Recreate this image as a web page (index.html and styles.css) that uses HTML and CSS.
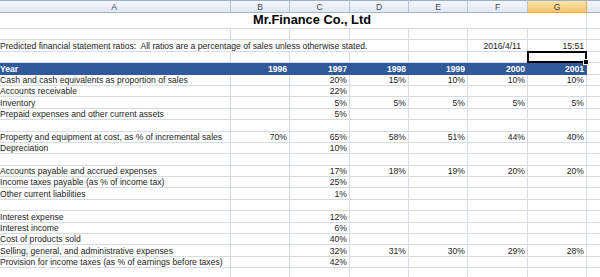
FILE: index.html
```html
<!DOCTYPE html>
<html>
<head>
<meta charset="utf-8">
<link rel="stylesheet" href="styles.css">
</head>
<body>
<div class="sheet">
  <div class="row hdr">
    <div class="h">A</div><div class="h">B</div><div class="h">C</div><div class="h">D</div><div class="h">E</div><div class="h">F</div><div class="h sel">G</div><div class="h"></div>
  </div>
  <div class="row title-row">
    <div class="c title">Mr.Finance Co., Ltd</div><div class="c"></div>
  </div>
  <div class="row"><div class="c"></div><div class="c"></div><div class="c"></div><div class="c"></div><div class="c"></div><div class="c"></div><div class="c"></div><div class="c"></div></div>
  <div class="row">
    <div class="c note">Predicted financial statement ratios:&nbsp; All ratios are a percentage of sales unless otherwise stated.</div><div class="c"></div><div class="c n date">2016/4/11</div><div class="c n">15:51</div><div class="c"></div>
  </div>
  <div class="row"><div class="c"></div><div class="c"></div><div class="c"></div><div class="c"></div><div class="c"></div><div class="c"></div><div class="c active"></div><div class="c"></div></div>
  <div class="row year">
    <div class="c">Year</div><div class="c n">1996</div><div class="c n">1997</div><div class="c n">1998</div><div class="c n">1999</div><div class="c n">2000</div><div class="c n">2001</div><div class="c plain"></div>
  </div>
  <div class="row"><div class="c">Cash and cash equivalents as proportion of sales</div><div class="c"></div><div class="c n">20%</div><div class="c n">15%</div><div class="c n">10%</div><div class="c n">10%</div><div class="c n">10%</div><div class="c"></div></div>
  <div class="row"><div class="c">Accounts receivable</div><div class="c"></div><div class="c n">22%</div><div class="c"></div><div class="c"></div><div class="c"></div><div class="c"></div><div class="c"></div></div>
  <div class="row"><div class="c">Inventory</div><div class="c"></div><div class="c n">5%</div><div class="c n">5%</div><div class="c n">5%</div><div class="c n">5%</div><div class="c n">5%</div><div class="c"></div></div>
  <div class="row"><div class="c">Prepaid expenses and other current assets</div><div class="c"></div><div class="c n">5%</div><div class="c"></div><div class="c"></div><div class="c"></div><div class="c"></div><div class="c"></div></div>
  <div class="row"><div class="c"></div><div class="c"></div><div class="c"></div><div class="c"></div><div class="c"></div><div class="c"></div><div class="c"></div><div class="c"></div></div>
  <div class="row"><div class="c">Property and equipment at cost, as % of incremental sales</div><div class="c n">70%</div><div class="c n">65%</div><div class="c n">58%</div><div class="c n">51%</div><div class="c n">44%</div><div class="c n">40%</div><div class="c"></div></div>
  <div class="row"><div class="c">Depreciation</div><div class="c"></div><div class="c n">10%</div><div class="c"></div><div class="c"></div><div class="c"></div><div class="c"></div><div class="c"></div></div>
  <div class="row"><div class="c"></div><div class="c"></div><div class="c"></div><div class="c"></div><div class="c"></div><div class="c"></div><div class="c"></div><div class="c"></div></div>
  <div class="row"><div class="c">Accounts payable and accrued expenses</div><div class="c"></div><div class="c n">17%</div><div class="c n">18%</div><div class="c n">19%</div><div class="c n">20%</div><div class="c n">20%</div><div class="c"></div></div>
  <div class="row"><div class="c">Income taxes payable (as % of income tax)</div><div class="c"></div><div class="c n">25%</div><div class="c"></div><div class="c"></div><div class="c"></div><div class="c"></div><div class="c"></div></div>
  <div class="row"><div class="c">Other current liabilities</div><div class="c"></div><div class="c n">1%</div><div class="c"></div><div class="c"></div><div class="c"></div><div class="c"></div><div class="c"></div></div>
  <div class="row"><div class="c"></div><div class="c"></div><div class="c"></div><div class="c"></div><div class="c"></div><div class="c"></div><div class="c"></div><div class="c"></div></div>
  <div class="row"><div class="c">Interest expense</div><div class="c"></div><div class="c n">12%</div><div class="c"></div><div class="c"></div><div class="c"></div><div class="c"></div><div class="c"></div></div>
  <div class="row"><div class="c">Interest income</div><div class="c"></div><div class="c n">6%</div><div class="c"></div><div class="c"></div><div class="c"></div><div class="c"></div><div class="c"></div></div>
  <div class="row"><div class="c">Cost of products sold</div><div class="c"></div><div class="c n">40%</div><div class="c"></div><div class="c"></div><div class="c"></div><div class="c"></div><div class="c"></div></div>
  <div class="row"><div class="c">Selling, general, and administrative expenses</div><div class="c"></div><div class="c n">32%</div><div class="c n">31%</div><div class="c n">30%</div><div class="c n">29%</div><div class="c n">28%</div><div class="c"></div></div>
  <div class="row"><div class="c">Provision for income taxes (as % of earnings before taxes)</div><div class="c"></div><div class="c n">42%</div><div class="c"></div><div class="c"></div><div class="c"></div><div class="c"></div><div class="c"></div></div>
  <div class="row"><div class="c"></div><div class="c"></div><div class="c"></div><div class="c"></div><div class="c"></div><div class="c"></div><div class="c"></div><div class="c"></div></div>
</div>
</body>
</html>
```
FILE: styles.css
```css
html, body {
  margin: 0;
  padding: 0;
  background: #ffffff;
  overflow: hidden;
}

.sheet {
  margin-left: -2px;
  width: 660px;
  font-family: "Liberation Sans", Arial, sans-serif;
  font-size: 8.6px;
  color: #1c1c1c;
}

.row {
  display: grid;
  grid-template-columns: 233px 59px 60px 59px 59px 60px 59px 71px;
  height: 11.4px;
}

.c {
  box-sizing: border-box;
  border-right: 1px solid #d5dbe5;
  border-bottom: 1px solid #d5dbe5;
  padding: 0 2px;
  white-space: nowrap;
  display: flex;
  align-items: flex-end;
  line-height: 9px;
  min-width: 0;
}

.n {
  justify-content: flex-end;
}

/* column header */
.hdr {
  height: 13px;
}

.h {
  box-sizing: border-box;
  background: linear-gradient(#f3f6fb, #e1e8f2);
  border-top: 1px solid #9db0c8;
  border-right: 1px solid #b6c4d6;
  border-bottom: 1px solid #9eb3cc;
  color: #3b4a5e;
  display: flex;
  align-items: center;
  justify-content: center;
  line-height: 10px;
}

.h.sel {
  background: linear-gradient(#fbe3ad, #f6c76f);
  border-right-color: #e9ae4f;
  border-bottom: 1px solid #f2a33a;
  color: #3a3a3a;
}

/* title */
.title-row {
  height: 16px;
}

.title {
  grid-column: 1 / 8;
  justify-content: center;
  padding-left: 42px;
  padding-bottom: 2px;
  font-size: 12.8px;
  font-weight: bold;
  line-height: 13px;
  color: #000000;
}

.note {
  grid-column: 1 / 5;
}

.date {
  padding-right: 6px;
}

/* selected cell */
.active {
  position: relative;
}

.active::before {
  content: "";
  position: absolute;
  left: -1px;
  top: -1px;
  right: -1px;
  bottom: -1px;
  border: 2px solid #000000;
}

.active::after {
  content: "";
  position: absolute;
  right: -3px;
  bottom: -3px;
  width: 4px;
  height: 4px;
  background: #000000;
  border: 1px solid #ffffff;
  z-index: 2;
}

/* year band */
.year .c {
  background: #30599a;
  color: #ffffff;
  font-weight: bold;
  border-right-color: #30599a;
  border-bottom-color: #30599a;
}

.year .c.plain {
  background: #ffffff;
  border-right-color: #d5dbe5;
  border-bottom-color: #d5dbe5;
}
```
